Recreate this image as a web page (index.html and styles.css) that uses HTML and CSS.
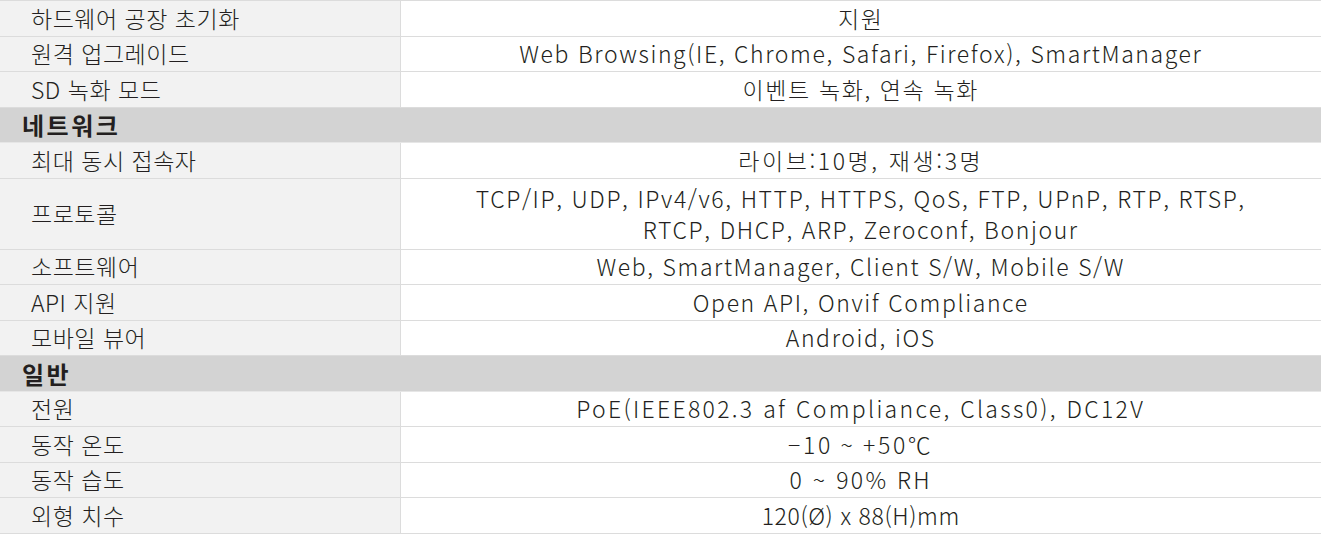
FILE: index.html
```html
<!DOCTYPE html>
<html lang="ko">
<head>
<meta charset="utf-8">
<link rel="stylesheet" href="styles.css">
</head>
<body>
<table class="spec">
  <colgroup><col class="c-label"><col class="c-value"></colgroup>
  <tbody>
    <tr><th class="label">하드웨어 공장 초기화</th><td class="value">지원</td></tr>
    <tr><th class="label">원격 업그레이드</th><td class="value">Web Browsing(IE, Chrome, Safari, Firefox), SmartManager</td></tr>
    <tr><th class="label">SD 녹화 모드</th><td class="value">이벤트 녹화, 연속 녹화</td></tr>
    <tr class="section"><th colspan="2">네트워크</th></tr>
    <tr><th class="label">최대 동시 접속자</th><td class="value wide">라이브:10명, 재생:3명</td></tr>
    <tr class="tall"><th class="label">프로토콜</th><td class="value">TCP/IP, UDP, IPv4/v6, HTTP, HTTPS, QoS, FTP, UPnP, RTP, RTSP,<br>RTCP, DHCP, ARP, Zeroconf, Bonjour</td></tr>
    <tr><th class="label">소프트웨어</th><td class="value">Web, SmartManager, Client S/W, Mobile S/W</td></tr>
    <tr><th class="label">API 지원</th><td class="value">Open API, Onvif Compliance</td></tr>
    <tr><th class="label">모바일 뷰어</th><td class="value">Android, iOS</td></tr>
    <tr class="section"><th colspan="2">일반</th></tr>
    <tr><th class="label">전원</th><td class="value wider">PoE(IEEE802.3 af Compliance, Class0), DC12V</td></tr>
    <tr><th class="label">동작 온도</th><td class="value wide">−10 ~ +50℃</td></tr>
    <tr><th class="label">동작 습도</th><td class="value wider">0 ~ 90% RH</td></tr>
    <tr><th class="label">외형 치수</th><td class="value tight">120(Ø) x 88(H)mm</td></tr>
  </tbody>
</table>
</body>
</html>
```
FILE: styles.css
```css
html, body {
  margin: 0;
  padding: 0;
  background: #ffffff;
}
body {
  font-family: "Noto Sans CJK KR", "Noto Sans", sans-serif;
  color: #231f20;
  font-size: 23px;
}
.spec {
  width: 1321px;
  border-collapse: collapse;
  table-layout: fixed;
  border-top: 1px solid #dcdcdc;
}
.c-label { width: 400px; }
.spec th, .spec td {
  height: 35.5px;
  padding: 0;
  box-sizing: border-box;
  border-bottom: 1px solid #dcdcdc;
  line-height: 31px;
  vertical-align: middle;
}
.spec .label {
  background: #f2f2f2;
  font-weight: 300;
  text-align: left;
  padding-left: 31px;
  letter-spacing: 0.5px;
  border-right: 1px solid #dcdcdc;
}
.spec .value {
  text-align: center;
  font-weight: 300;
  letter-spacing: 1.6px;
}
.spec .value.wider {
  letter-spacing: 2.3px;
}
.spec .value.wide {
  letter-spacing: 2.6px;
}
.spec .value.tight {
  letter-spacing: 0.6px;
}
.spec .tall th, .spec .tall td {
  height: 71px;
}
.spec .section th {
  background: #d3d3d3;
  text-align: left;
  padding-left: 22px;
  font-size: 24px;
  font-weight: 700;
  letter-spacing: 2.5px;
  border-bottom: 1px solid #e6e6e6;
}
```
